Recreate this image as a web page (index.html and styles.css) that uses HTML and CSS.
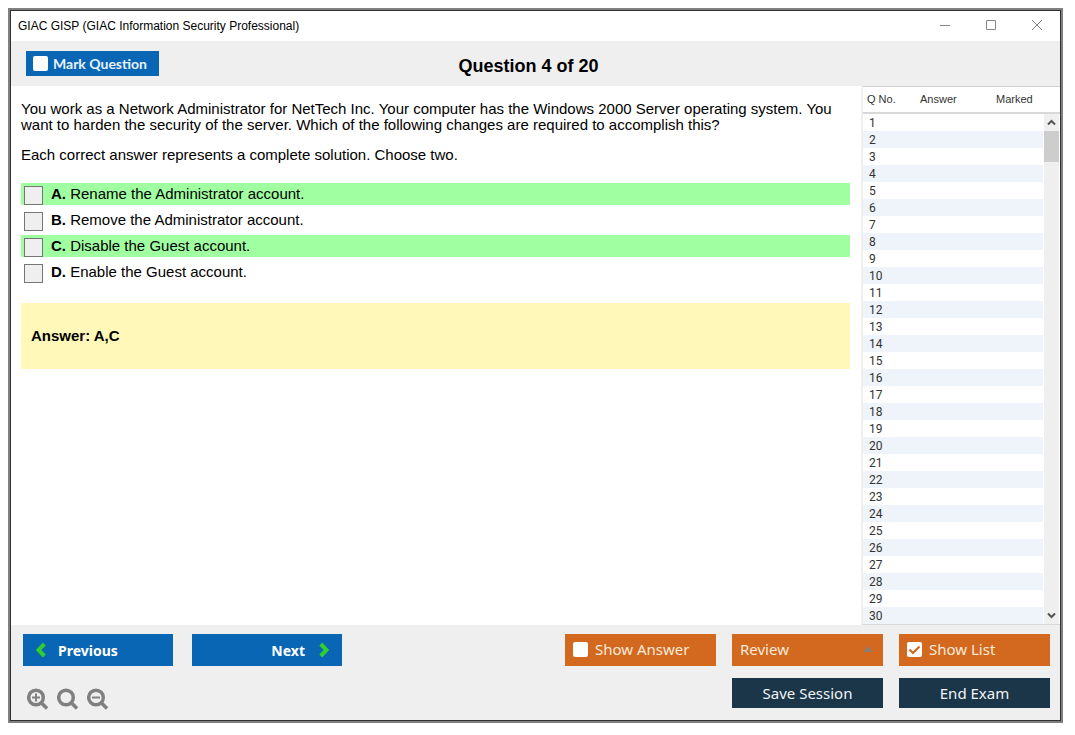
FILE: index.html
```html
<!DOCTYPE html>
<html lang="en">
<head>
    <meta charset="UTF-8">
    <meta name="viewport" content="width=device-width, initial-scale=1.0">
    <title>GIAC GISP (GIAC Information Security Professional)</title>
    <link rel="stylesheet" href="styles.css">
</head>
<body>
    <div class="window">
        <header class="titlebar">
            <span class="title">GIAC GISP (GIAC Information Security Professional)</span>
            <div class="window-controls">
                <button type="button" aria-label="Minimize">
                    <svg width="12" height="12" viewBox="0 0 12 12"><path d="M1 5.500h10"/></svg>
                </button>
                <button type="button" aria-label="Maximize">
                    <svg width="12" height="12" viewBox="0 0 12 12"><path d="M1.500 .5h9v9h-9z"/></svg>
                </button>
                <button type="button" aria-label="Close">
                    <svg width="12" height="12" viewBox="0 0 12 12"><path d="M1 0l10 10M11 0L1 10"/></svg>
                </button>
            </div>
        </header>

        <div class="toolbar">
            <label class="mark"><input type="checkbox" class="tick"> Mark Question</label>
            <h1>Question 4 of 20</h1>
        </div>

        <div class="content">
            <main class="question">
                <p>You work as a Network Administrator for NetTech Inc. Your computer has the Windows 2000 Server operating system. You want to harden the security of the server. Which of the following changes are required to accomplish this?</p>
                <p>Each correct answer represents a complete solution. Choose two.</p>
                <div class="options">
                    <label class="option correct"><input type="checkbox"><span><b>A.</b> Rename the Administrator account.</span></label>
                    <label class="option"><input type="checkbox"><span><b>B.</b> Remove the Administrator account.</span></label>
                    <label class="option correct"><input type="checkbox"><span><b>C.</b> Disable the Guest account.</span></label>
                    <label class="option"><input type="checkbox"><span><b>D.</b> Enable the Guest account.</span></label>
                </div>
                <div class="answer">Answer: A,C</div>
            </main>

            <aside class="list" id="list">
                <table>
                    <thead>
                        <tr><th class="col-no">Q No.</th><th class="col-answer">Answer</th><th>Marked</th></tr>
                    </thead>
                    <tbody>
                        <tr><td>1</td><td></td><td></td></tr>
                        <tr><td>2</td><td></td><td></td></tr>
                        <tr><td>3</td><td></td><td></td></tr>
                        <tr><td>4</td><td></td><td></td></tr>
                        <tr><td>5</td><td></td><td></td></tr>
                        <tr><td>6</td><td></td><td></td></tr>
                        <tr><td>7</td><td></td><td></td></tr>
                        <tr><td>8</td><td></td><td></td></tr>
                        <tr><td>9</td><td></td><td></td></tr>
                        <tr><td>10</td><td></td><td></td></tr>
                        <tr><td>11</td><td></td><td></td></tr>
                        <tr><td>12</td><td></td><td></td></tr>
                        <tr><td>13</td><td></td><td></td></tr>
                        <tr><td>14</td><td></td><td></td></tr>
                        <tr><td>15</td><td></td><td></td></tr>
                        <tr><td>16</td><td></td><td></td></tr>
                        <tr><td>17</td><td></td><td></td></tr>
                        <tr><td>18</td><td></td><td></td></tr>
                        <tr><td>19</td><td></td><td></td></tr>
                        <tr><td>20</td><td></td><td></td></tr>
                        <tr><td>21</td><td></td><td></td></tr>
                        <tr><td>22</td><td></td><td></td></tr>
                        <tr><td>23</td><td></td><td></td></tr>
                        <tr><td>24</td><td></td><td></td></tr>
                        <tr><td>25</td><td></td><td></td></tr>
                        <tr><td>26</td><td></td><td></td></tr>
                        <tr><td>27</td><td></td><td></td></tr>
                        <tr><td>28</td><td></td><td></td></tr>
                        <tr><td>29</td><td></td><td></td></tr>
                        <tr><td>30</td><td></td><td></td></tr>
                    </tbody>
                </table>
                <div class="scrollbar">
                    <button type="button" aria-label="Scroll up">
                        <svg width="9" height="7" viewBox="0 0 9 7"><path d="M1 5.500L4.500 2L8 5.500"/></svg>
                    </button>
                    <div class="thumb"></div>
                    <button type="button" aria-label="Scroll down">
                        <svg width="9" height="7" viewBox="0 0 9 7"><path d="M1 1.500L4.500 5L8 1.500"/></svg>
                    </button>
                </div>
            </aside>
        </div>

        <footer class="footer">
            <div class="nav">
                <div class="nav-buttons">
                    <button type="button" class="btn btn-blue">
                        <svg width="10" height="16" viewBox="0 0 10 16"><path d="M8.300 2L2.500 8l5.800 6"/></svg>
                        Previous
                    </button>
                    <button type="button" class="btn btn-blue btn-next">
                        Next
                        <svg width="10" height="16" viewBox="0 0 10 16"><path d="M1.700 2L7.500 8l-5.800 6"/></svg>
                    </button>
                </div>
                <div class="zoom">
                    <button type="button" aria-label="Zoom in">
                        <svg width="22" height="22" viewBox="0 0 22 22"><circle cx="9" cy="9.500" r="7.300"/><path d="M14 14.500L20 20.500"/><path class="sign" d="M5 9.500h8M9 5.500v8"/></svg>
                    </button>
                    <button type="button" aria-label="Reset zoom">
                        <svg width="22" height="22" viewBox="0 0 22 22"><circle cx="9" cy="9.500" r="7.300"/><path d="M14 14.500L20 20.500"/></svg>
                    </button>
                    <button type="button" aria-label="Zoom out">
                        <svg width="22" height="22" viewBox="0 0 22 22"><circle cx="9" cy="9.500" r="7.300"/><path d="M14 14.500L20 20.500"/><path class="sign" d="M5 9.500h8"/></svg>
                    </button>
                </div>
            </div>
            <div class="actions">
                <label class="btn btn-orange"><input type="checkbox" class="tick"> Show Answer</label>
                <button type="button" class="btn btn-orange btn-review" aria-haspopup="menu">
                    Review
                    <svg width="10" height="6" viewBox="0 0 10 6"><path d="M0 6L5 0l5 6z"/></svg>
                </button>
                <label class="btn btn-orange"><input type="checkbox" class="tick" checked> Show List</label>
                <button type="button" class="btn btn-dark btn-save">Save Session</button>
                <button type="button" class="btn btn-dark">End Exam</button>
            </div>
        </footer>
    </div>
</body>
</html>
```
FILE: styles.css
```css
* {
    margin: 0;
    padding: 0;
    box-sizing: border-box;
}

body {
    display: flex;
    min-height: 100vh;
    padding: 8px 12px 12px 8px;
    background: #fff;
    color: #000;
    font-family: "Liberation Sans", Arial, sans-serif;
}

button {
    border: none;
    background: none;
    font: inherit;
}

svg {
    display: block;
    flex-shrink: 0;
    fill: none;
}

.window {
    flex: 1;
    display: flex;
    flex-direction: column;
    border: 2px solid #808080;
    outline: 1px solid #303030;
    outline-offset: -3px;
    padding: 1px;
    background: #fff;
}

/* title bar */
.titlebar {
    display: flex;
    justify-content: space-between;
    align-items: center;
    height: 30px;
    padding: 0 17px 0 7px;
}

.title {
    font-size: 12px;
}

.window-controls {
    display: flex;
    gap: 34px;
}

.window-controls svg {
    stroke: #888;
}

/* toolbar */
.toolbar {
    display: grid;
    grid-template-columns: 1fr auto 1fr;
    align-items: center;
    height: 45px;
    padding: 0 29px 0 15px;
    background: #efefef;
}

.mark {
    display: flex;
    justify-self: start;
    align-items: center;
    gap: 5px;
    height: 25px;
    padding: 0 12px 0 7px;
    background: #0866b5;
    color: #e8f2fa;
    font-family: Lato, sans-serif;
    font-size: 14px;
    font-weight: bold;
}

.toolbar h1 {
    padding-top: 5px;
    font-size: 18px;
}

.tick {
    appearance: none;
    width: 15px;
    height: 15px;
    border-radius: 2px;
    background: #fff;
}

.tick:checked {
    background: #fff url("data:image/svg+xml,%3Csvg xmlns='http://www.w3.org/2000/svg' viewBox='0 0 15 15'%3E%3Cpath d='M2.500 7.500l3.500 3.500l6.500-6.500' fill='none' stroke='%23d2691e' stroke-width='2.200'/%3E%3C/svg%3E");
}

/* question */
.content {
    flex: 1;
    display: flex;
}

.question {
    flex: 1;
    padding: 15px 11px 15px 10px;
    font-size: 15px;
    line-height: 16px;
}

.question p {
    margin-bottom: 14px;
}

.options {
    display: flex;
    flex-direction: column;
    gap: 4px;
    margin: 20px 0;
}

.option {
    display: flex;
    align-items: flex-end;
    gap: 8px;
    height: 22px;
    padding-left: 3px;
    line-height: 22px;
}

.option input {
    appearance: none;
    width: 19px;
    height: 19px;
    border: 1px solid #767676;
    background: #efefef;
}

.correct {
    background: #a0ffa0;
}

.answer {
    padding: 25px 10px;
    background: #fff8b8;
    font-weight: bold;
}

/* question list */
.list {
    position: relative;
    width: 199px;
    border-left: 2px solid #efefef;
    border-bottom: 1px solid #d8d8d8;
    background: #fff;
    color: #333;
    font-family: Roboto, sans-serif;
    font-size: 12px;
}

.list table {
    width: 100%;
    table-layout: fixed;
    border-collapse: separate;
    border-spacing: 0;
}

.list th {
    height: 28px;
    padding: 0 0 2px 4px;
    border-top: 1px solid #d0d0d0;
    border-bottom: 2px solid #d8d8d8;
    font-family: "Liberation Sans", Arial, sans-serif;
    font-size: 11px;
    font-weight: normal;
    text-align: left;
}

.col-no {
    width: 53px;
}

.col-answer {
    width: 76px;
}

.list td {
    height: 17px;
    padding: 2px 0 0 6px;
    line-height: 15px;
}

.list tbody tr:nth-child(even) {
    background: #eef4f9;
}

.scrollbar {
    position: absolute;
    top: 28px;
    right: 0;
    bottom: 0;
    display: flex;
    flex-direction: column;
    width: 17px;
    border: solid #fff;
    border-width: 0 1px;
    background: #efefef;
}

.scrollbar button {
    display: grid;
    place-items: center;
    height: 17px;
}

.scrollbar button:last-child {
    margin-top: auto;
}

.scrollbar svg {
    stroke: #555;
    stroke-width: 2;
}

.thumb {
    height: 31px;
    background: #cdcdcd;
}

/* footer */
.footer {
    display: flex;
    justify-content: space-between;
    padding: 9px 10px 10px 12px;
    background: #efefef;
}

.nav-buttons {
    display: flex;
    gap: 19px;
}

.btn {
    display: flex;
    align-items: center;
    width: 150px;
    height: 32px;
    padding: 0 8px;
    font-family: "Noto Sans", sans-serif;
    font-size: 15px;
}

.btn-blue {
    gap: 12px;
    padding: 0 13px;
    background: #0866b5;
    color: #fff;
    font-size: 14px;
    font-weight: bold;
}

.btn-blue svg {
    stroke: #2fcf2f;
    stroke-width: 4;
}

.btn-next {
    justify-content: flex-end;
    gap: 14px;
}

.btn-orange {
    gap: 7px;
    padding-bottom: 2px;
    background: #d2691e;
    color: #fbe9dc;
}

.btn-review {
    justify-content: space-between;
    padding-right: 10px;
}

.btn-review svg {
    fill: #8b7d72;
}

.btn-dark {
    justify-content: center;
    height: 30px;
    background: #1b3549;
    color: #f0f4f7;
}

.zoom {
    display: flex;
    gap: 8px;
    margin-top: 22px;
    padding-left: 4px;
}

.zoom svg {
    stroke: #808080;
    stroke-width: 3.5;
}

.zoom .sign {
    stroke-width: 2;
}

.actions {
    display: grid;
    grid-template-columns: repeat(3, 151px);
    gap: 12px 16px;
    align-content: start;
}

.actions .btn {
    width: auto;
}

.btn-save {
    grid-column: 2;
}
```
